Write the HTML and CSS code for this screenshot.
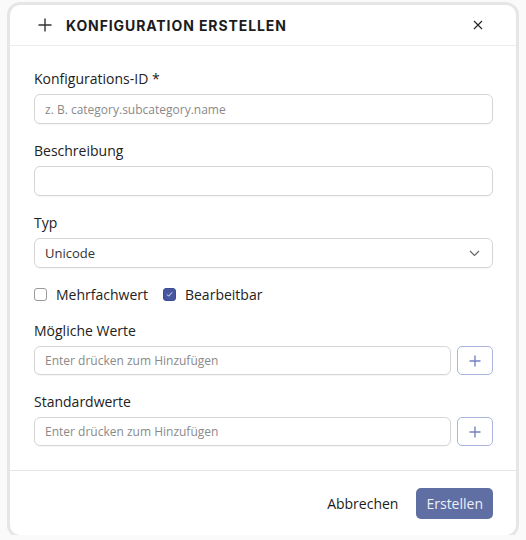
FILE: index.html
```html
<!DOCTYPE html>
<html lang="de">
<head>
    <meta charset="UTF-8">
    <meta name="viewport" content="width=device-width, initial-scale=1.0">
    <title>Konfiguration erstellen</title>
    <link rel="stylesheet" href="styles.css">
</head>
<body>

<div class="dialog">
    <div class="dialog-header">
        <svg class="header-icon" width="14" height="14" viewBox="0 0 14 14">
            <path d="M7 0.5V13.5M0.5 7H13.5" stroke="#333" stroke-width="1.4" fill="none"/>
        </svg>
        <h1>Konfiguration erstellen</h1>
        <button class="close-button" aria-label="Schließen">
            <svg width="10" height="10" viewBox="0 0 10 10">
                <path d="M1 1L9 9M9 1L1 9" stroke="#222" stroke-width="1.1" fill="none"/>
            </svg>
        </button>
    </div>

    <div class="dialog-body">
        <div class="field">
            <label>Konfigurations-ID *</label>
            <input type="text" placeholder="z. B. category.subcategory.name">
        </div>

        <div class="field">
            <label>Beschreibung</label>
            <input type="text">
        </div>

        <div class="field">
            <label>Typ</label>
            <div class="select">
                <span>Unicode</span>
                <svg width="11" height="7" viewBox="0 0 11 7">
                    <path d="M1 1L5.5 5.5L10 1" stroke="#666" stroke-width="1.2" fill="none"/>
                </svg>
            </div>
        </div>

        <div class="checkbox-row">
            <label class="checkbox"><input type="checkbox"> Mehrfachwert</label>
            <label class="checkbox"><input type="checkbox" checked> Bearbeitbar</label>
        </div>

        <div class="field">
            <label>Mögliche Werte</label>
            <div class="add-row">
                <input type="text" placeholder="Enter drücken zum Hinzufügen">
                <button class="add-button" aria-label="Hinzufügen">
                    <svg width="12" height="12" viewBox="0 0 12 12">
                        <path d="M6 0.5V11.5M0.5 6H11.5" stroke="#7483c4" stroke-width="1.4" fill="none"/>
                    </svg>
                </button>
            </div>
        </div>

        <div class="field">
            <label>Standardwerte</label>
            <div class="add-row">
                <input type="text" placeholder="Enter drücken zum Hinzufügen">
                <button class="add-button" aria-label="Hinzufügen">
                    <svg width="12" height="12" viewBox="0 0 12 12">
                        <path d="M6 0.5V11.5M0.5 6H11.5" stroke="#7483c4" stroke-width="1.4" fill="none"/>
                    </svg>
                </button>
            </div>
        </div>
    </div>

    <div class="dialog-footer">
        <button class="cancel-button">Abbrechen</button>
        <button class="submit-button">Erstellen</button>
    </div>
</div>

</body>
</html>
```

FILE: styles.css
```css
/* Dialog "Konfiguration erstellen" */
body {
    font-family: 'Open Sans', sans-serif;
    margin: 0;
    padding: 0;
    background-color: #fafafa;
    color: #222;
}

.dialog {
    width: 506px;
    height: 530px;
    margin: 5px 0 0 10px;
    background-color: #fff;
    border-radius: 10px;
    box-shadow: 0 0 0 3px #e6e6e6;
    display: flex;
    flex-direction: column;
    box-sizing: border-box;
}

.dialog-header {
    height: 40px;
    display: flex;
    align-items: center;
    padding: 0 28px;
    border-bottom: 1px solid #ececec;
}

.header-icon {
    margin-right: 14px;
}

.dialog-header h1 {
    flex: 1;
    margin: 0;
    font-family: 'Inter', sans-serif;
    font-size: 14px;
    font-weight: 700;
    text-transform: uppercase;
    letter-spacing: 0.9px;
    color: #1c1c1c;
}

.close-button {
    background: none;
    border: none;
    padding: 0;
    margin-right: 5px;
    cursor: pointer;
    display: flex;
}

.dialog-body {
    flex: 1;
    padding: 23px 23px 0 24px;
    display: flex;
    flex-direction: column;
    gap: 17px;
}

.field label {
    display: block;
    font-size: 14px;
    font-weight: 500;
    line-height: 20px;
    margin-bottom: 5px;
}

.field input, .select {
    width: 100%;
    height: 30px;
    box-sizing: border-box;
    border: 1px solid #d6d6d6;
    border-radius: 6px;
    padding: 0 10px;
    font-family: 'Open Sans', sans-serif;
    font-size: 12px;
    color: #333;
    box-shadow: 0 1px 1px rgba(0, 0, 0, 0.04);
}

.field input::placeholder {
    color: #8a8a8a;
}

.select {
    display: flex;
    align-items: center;
    justify-content: space-between;
    font-size: 13px;
    padding-right: 12px;
}

.checkbox-row {
    display: flex;
    gap: 15px;
    height: 20px;
    margin: -1px 0 0;
}

.checkbox {
    display: flex;
    align-items: center;
    gap: 9px;
    font-size: 14px;
}

.checkbox input {
    appearance: none;
    width: 13px;
    height: 13px;
    margin: 0;
    border: 1px solid #999;
    border-radius: 3px;
    background-color: #fff;
}

.checkbox input:checked {
    background-color: #4657a0;
    border-color: #3c4d92;
    background-image: url("data:image/svg+xml,%3Csvg xmlns='http://www.w3.org/2000/svg' viewBox='0 0 13 13'%3E%3Cpath d='M3.5 6.5L5.5 8.5L9.5 4' stroke='white' stroke-width='1' fill='none'/%3E%3C/svg%3E");
}

.add-row {
    display: flex;
    gap: 6px;
}

.add-row input {
    flex: 1;
    height: 29px;
}

.add-button {
    width: 36px;
    height: 29px;
    flex-shrink: 0;
    background-color: #fff;
    border: 1px solid #aab5e0;
    border-radius: 5px;
    display: flex;
    align-items: center;
    justify-content: center;
    cursor: pointer;
}

.dialog-footer {
    height: 64px;
    border-top: 1px solid #e6e6e6;
    display: flex;
    align-items: center;
    justify-content: flex-end;
    padding: 0 23px;
    gap: 18px;
}

.cancel-button {
    background: none;
    border: none;
    font-family: 'Open Sans', sans-serif;
    font-size: 14px;
    color: #1c1c1c;
    padding: 0;
    cursor: pointer;
}

.submit-button {
    background-color: #5f6ea3;
    color: #eef0f7;
    border: none;
    border-radius: 5px;
    height: 31px;
    padding: 0 10px;
    font-family: 'Open Sans', sans-serif;
    font-size: 14px;
    cursor: pointer;
}
```
